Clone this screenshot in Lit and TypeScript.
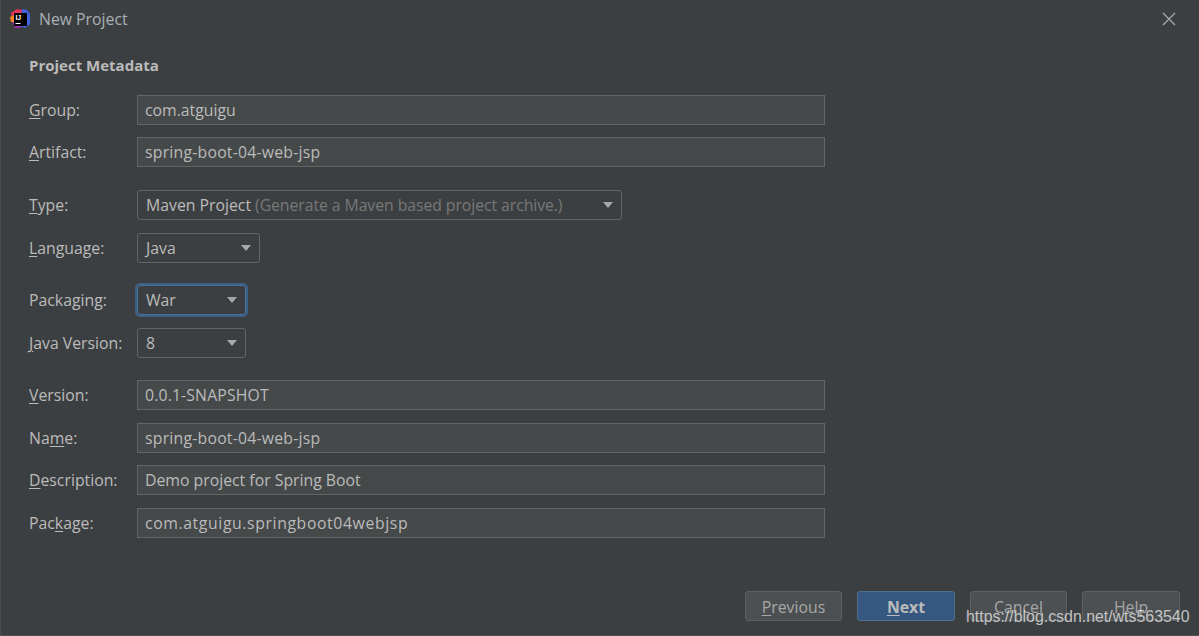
import { LitElement, html, css, nothing } from "lit";
import { customElement } from "lit/decorators.js";

type Row = { pre: string; u: string; post: string; val: string; kind: "input" | "select"; hint?: string; cls?: string; gap: string; focus?: boolean; track?: string };

const rows: Row[] = [
  { pre: "", u: "G", post: "roup:", val: "com.atguigu", kind: "input", gap: "g12" },
  { pre: "", u: "A", post: "rtifact:", val: "spring-boot-04-web-jsp", kind: "input", gap: "g23", track: "t-slug" },
  { pre: "", u: "T", post: "ype:", val: "Maven Project", hint: "(Generate a Maven based project archive.)", kind: "select", cls: "w-type", gap: "g13" },
  { pre: "", u: "L", post: "anguage:", val: "Java", kind: "select", cls: "w-lang", gap: "g22" },
  { pre: "Packa", u: "g", post: "ing:", val: "War", kind: "select", cls: "w-pack", gap: "g13", focus: true },
  { pre: "", u: "J", post: "ava Version:", val: "8", kind: "select", cls: "w-pack", gap: "g22" },
  { pre: "", u: "V", post: "ersion:", val: "0.0.1-SNAPSHOT", kind: "input", gap: "g13", track: "t-ver" },
  { pre: "Na", u: "m", post: "e:", val: "spring-boot-04-web-jsp", kind: "input", gap: "g12", track: "t-slug" },
  { pre: "", u: "D", post: "escription:", val: "Demo project for Spring Boot", kind: "input", gap: "g13" },
  { pre: "Pac", u: "k", post: "age:", val: "com.atguigu.springboot04webjsp", kind: "input", gap: "g0", track: "t-pkg" },
];

@customElement("app-root")
export class AppRoot extends LitElement {
  static styles = css`
    :host {
      display: block;
      width: 1199px;
      height: 636px;
      overflow: hidden;
      position: relative;
      background: #3c3f41;
      color: #bbbbbb;
      font-family: "Open Sans", "Noto Sans", sans-serif;
      font-size: 15.8px;
    }
    .dialog {
      height: 636px;
      box-sizing: border-box;
      border-left: 1px solid #4a4d4f;
      border-bottom: 1px solid #4d4f50;
      display: flex;
      flex-direction: column;
    }
    .title {
      height: 37px;
      display: flex;
      align-items: center;
      padding: 0 0 0 9px;
      gap: 8px;
      color: #a9b0b5;
      font-size: 15.8px;
    }
    .title svg.logo { width: 21px; height: 21px; flex: none; }
    .close { margin-left: auto; margin-right: 23px; width: 14px; height: 14px; display: block; }
    .body { padding: 0 0 0 28px; flex: 1; }
    .heading { font-weight: 700; font-size: 15px; line-height: 20px; margin-top: 18px; margin-bottom: 20px; color: #bbbbbb; }
    .row { display: grid; grid-template-columns: 108px auto; align-items: center; height: 30px; justify-content: start; }
    .g12 { margin-bottom: 12px; }
    .g13 { margin-bottom: 13px; }
    .g22 { margin-bottom: 22px; }
    .g23 { margin-bottom: 23px; }
    .g0 { margin-bottom: 0; }
    u { text-underline-offset: 2px; text-decoration-thickness: 1px; }
    .input {
      box-sizing: border-box;
      width: 688px;
      height: 30px;
      border: 1px solid #646464;
      background: #45494a;
      padding: 0 7px;
      display: flex;
      align-items: center;
      color: #bbbbbb;
    }
    .t-slug { letter-spacing: 0.22px; }
    .t-ver { letter-spacing: 0.14px; }
    .t-pkg { letter-spacing: 0.6px; }
    .select {
      box-sizing: border-box;
      height: 30px;
      border: 1px solid #646464;
      border-radius: 3px;
      padding: 0 8px;
      display: flex;
      align-items: center;
      position: relative;
      color: #bbbbbb;
    }
    .select.focus {
      border-color: #46729e;
      box-shadow: 0 0 0 2px #3d6185;
    }
    .w-type { width: 485px; }
    .w-lang { width: 123px; }
    .w-pack { width: 109px; }
    .hint { color: #787878; margin-left: 4px; letter-spacing: -0.07px; }
    .arrow {
      margin-left: auto;
      margin-right: 0;
      width: 0; height: 0;
      border-left: 5.5px solid transparent;
      border-right: 5.5px solid transparent;
      border-top: 6.5px solid #a8a8a8;
    }
    .footer {
      display: flex;
      justify-content: flex-end;
      gap: 15px;
      padding: 0 19px 14px 0;
    }
    .btn {
      box-sizing: border-box;
      width: 98px;
      height: 30px;
      padding-top: 1px;
      border: 1px solid #5e6060;
      border-radius: 3px;
      background: #4c5052;
      display: flex;
      align-items: center;
      justify-content: center;
      color: #a8a8a8;
    }
    .btn.narrow { width: 97px; }
    .btn.primary {
      background: #365880;
      border-color: #4c708c;
      color: #bbbbbb;
      font-weight: 700;
    }
    .mark {
      position: absolute;
      left: 966px;
      top: 606px;
      font-family: "Liberation Sans", Arial, sans-serif;
      font-size: 15.9px;
      line-height: 22px;
      color: rgba(225, 225, 225, 0.82);
      white-space: nowrap;
    }
  `;

  private row(r: Row) {
    const label = html`<div>${r.pre}<u>${r.u}</u>${r.post}</div>`;
    const ctl =
      r.kind === "input"
        ? html`<div class="input ${r.track ?? ""}">${r.val}</div>`
        : html`<div class="select ${r.cls} ${r.focus ? "focus" : ""}">
            <span>${r.val}</span>${r.hint ? html`<span class="hint">${r.hint}</span>` : nothing}
            <span class="arrow"></span>
          </div>`;
    return html`<div class="row ${r.gap}">${label}${ctl}</div>`;
  }

  render() {
    return html`
      <div class="dialog">
        <div class="title">
          <svg class="logo" viewBox="0 0 21 21">
            <path d="M1 5 L7 1 L13 2 L9 12 L2 12 Z" fill="#e8305f" />
            <path d="M12 1 L17 2 L20 6 L20 16 L15 20 L10 18 Z" fill="#3f63e0" />
            <path d="M0 9 L4 7 L5 14 L1 14 Z" fill="#f58220" />
            <path d="M2 14 L9 14 L11 20 L5 20 Z" fill="#9b2fae" />
            <rect x="4" y="5" width="13" height="13" fill="#000" />
            <text x="5.4" y="12" font-family="Liberation Sans" font-size="7" font-weight="700" fill="#fff">IJ</text>
            <rect x="5.5" y="15" width="5" height="1" fill="#fff" />
          </svg>
          <span>New Project</span>
          <svg class="close" viewBox="0 0 14 14"><path d="M1 1 L13 13 M13 1 L1 13" stroke="#a6a6a6" stroke-width="1.4" fill="none" /></svg>
        </div>
        <div class="body">
          <div class="heading">Project Metadata</div>
          ${rows.map((r) => this.row(r))}
        </div>
        <div class="footer">
          <div class="btn narrow"><span><u>P</u>revious</span></div>
          <div class="btn primary"><span><u>N</u>ext</span></div>
          <div class="btn narrow">Cancel</div>
          <div class="btn">Help</div>
        </div>
      </div>
      <div class="mark">https://blog.csdn.net/wts563540</div>
    `;
  }
}
